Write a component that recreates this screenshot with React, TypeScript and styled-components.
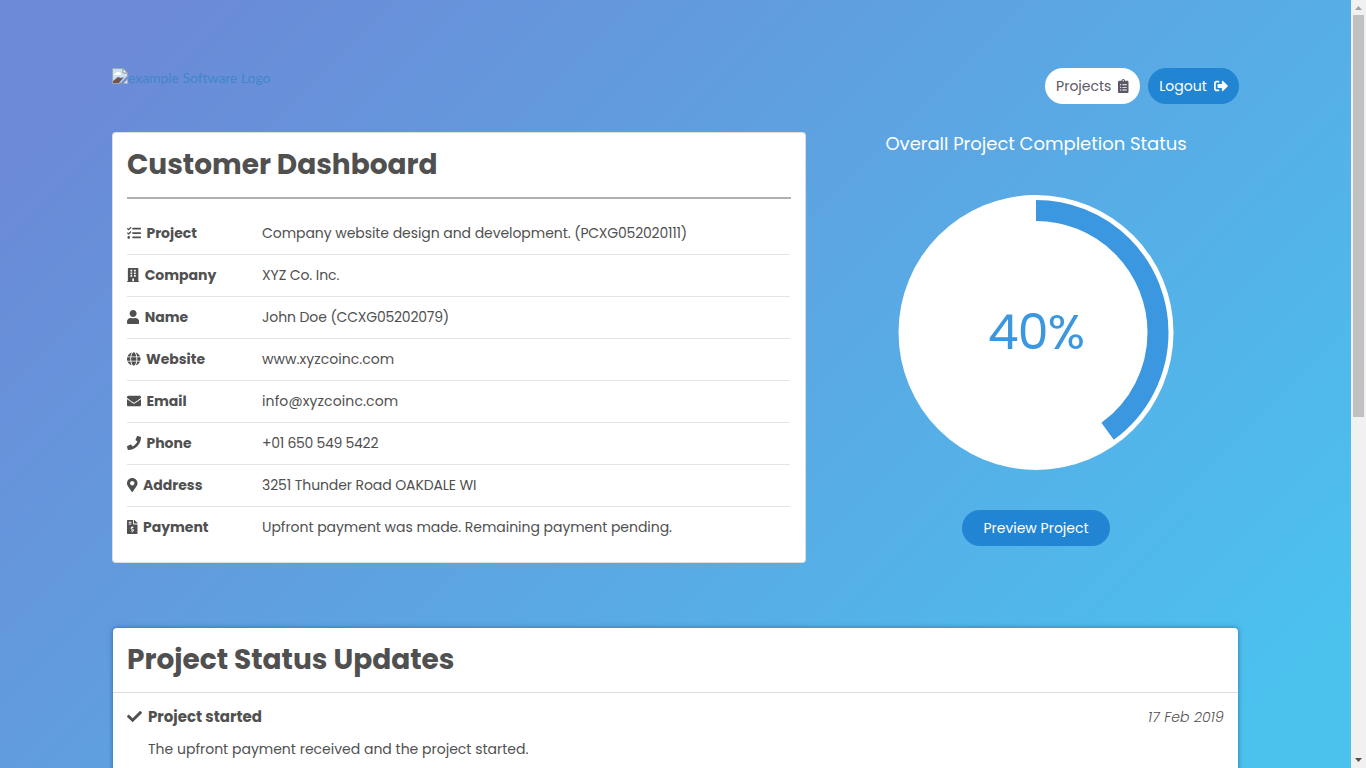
import React from 'react';
import styled, { createGlobalStyle } from 'styled-components';
import type { IconType } from 'react-icons';
import {
  FaBuilding, FaCheck, FaClipboardList, FaEnvelope, FaFileInvoiceDollar, FaGlobe,
  FaMapMarkerAlt, FaPhone, FaSignOutAlt, FaTasks, FaUser,
} from 'react-icons/fa';

const GlobalStyle = createGlobalStyle`
  *, *::before, *::after { box-sizing: border-box; }
  body {
    margin: 0;
    overflow: hidden;
    font-family: Poppins, Inter, 'Open Sans', sans-serif;
    font-size: 14px;
    line-height: 21px;
    color: #505050;
  }
  h1, h2, h3, p, dl, dt, dd { margin: 0; }
`;

const Window = styled.div`
  display: flex;
  width: 1366px;
  height: 768px;
  overflow: hidden;
`;

const Page = styled.main`
  flex: 1;
  min-width: 0;
  height: 768px;
  overflow: hidden;
  padding: 68px 112px 0;
  background: linear-gradient(135deg, #6c8ad7 8%, #4bc1ee 93%);
`;

const Label = styled.span<{ $track?: number }>`
  letter-spacing: ${p => p.$track ?? 0}px;
  white-space: nowrap;
`;

const Header = styled.header`
  display: flex;
  justify-content: space-between;
  align-items: flex-start;
  height: 64px;
`;

const Logo = styled.a`
  display: flex;
  align-items: flex-start;
  height: 20px;
  color: #4087cc;
  font-family: Lato, sans-serif;
  font-size: 14px;
  line-height: 20px;
`;

const Actions = styled.nav`
  display: flex;
  gap: 8px;
`;

const Pill = styled.button<{ $width: number; $light?: boolean; $iconWidth?: number }>`
  display: flex;
  align-items: center;
  justify-content: center;
  gap: 7px;
  width: ${p => p.$width}px;
  height: 36px;
  padding: 0;
  border: 0;
  border-radius: 18px;
  background: ${p => (p.$light ? '#fff' : '#2185d3')};
  color: ${p => (p.$light ? '#5c5866' : '#fff')};
  font: inherit;
  & > svg { width: ${p => p.$iconWidth ?? 14}px; height: 14px; }
`;

const Overview = styled.section`
  display: flex;
  justify-content: space-between;
  height: 496px;
`;

const DetailsCard = styled.article`
  width: 694px;
  height: 431px;
  padding: 14px;
  border: 1px solid rgba(0, 0, 0, 0.13);
  border-radius: 4px;
  background: #fff;
`;

const CardTitle = styled.h1`
  font-size: 28px;
  line-height: 36px;
  font-weight: 700;
`;

const DetailsHead = styled.div`
  height: 52px;
  border-bottom: 2px solid #b0b0b0;
  margin-bottom: 14px;
`;

const DetailRow = styled.div`
  display: flex;
  align-items: center;
  width: 663px;
  height: 42px;
  border-bottom: 1px solid #e3e4e5;
  &:last-child { border-bottom-color: transparent; }
`;

const DetailTerm = styled.dt<{ $iconWidth: number }>`
  display: flex;
  align-items: center;
  gap: 5.4px;
  width: 135px;
  font-weight: 700;
  & > svg { width: ${p => p.$iconWidth}px; height: 14px; margin-bottom: 2px; }
`;

const Completion = styled.aside`
  display: flex;
  flex-direction: column;
  align-items: center;
  width: 406px;
`;

const CompletionTitle = styled.h2`
  margin-bottom: 39px;
  color: #fff;
  font-size: 18px;
  font-weight: 400;
  line-height: 24px;
`;

const Dial = styled.div`
  display: grid;
  width: 276px;
  height: 275px;
  margin-bottom: 40px;
  place-items: center;
  & > * { grid-area: 1 / 1; }
`;

const Percent = styled.span`
  padding-bottom: 1px;
  color: #3b97df;
  font-size: 49px;
  line-height: 60px;
  font-weight: 400;
`;

const UpdatesCard = styled.article`
  height: 400px;
  margin: 0 1px;
  border-radius: 4px;
  background: #fff;
  box-shadow: 0 0 5px rgba(0, 50, 110, 0.5);
`;

const UpdatesHead = styled.div`
  height: 65px;
  padding: 14px;
  border-bottom: 1px solid #dcddde;
`;

const Update = styled.div`
  padding: 14px 14px 0;
`;

const UpdateTop = styled.div`
  display: flex;
  align-items: center;
  justify-content: space-between;
  height: 21px;
`;

const UpdateTitle = styled.h3`
  display: flex;
  align-items: center;
  gap: 6px;
  padding-bottom: 2px;
  font-size: 15px;
  font-weight: 700;
`;

const UpdateDate = styled.time`
  font-style: italic;
  font-weight: 300;
`;

const UpdateText = styled.p`
  margin-top: 11px;
  padding-left: 21px;
`;

const Scrollbar = styled.div`
  display: flex;
  flex-direction: column;
  align-items: center;
  width: 15px;
  height: 768px;
  background: #f1f1f1;
`;

const Thumb = styled.div`
  width: 11px;
  height: 402px;
  margin-bottom: auto;
  background: #c1c1c1;
`;

const details: { icon: IconType; iconWidth: number; term: string; value: string; track: number; code?: string }[] = [
  { icon: FaTasks, iconWidth: 14, term: 'Project', value: 'Company website design and development. ', track: -0.06, code: '(PCXG052020111)' },
  { icon: FaBuilding, iconWidth: 12.25, term: 'Company', value: 'XYZ Co. Inc.', track: -0.1 },
  { icon: FaUser, iconWidth: 12.25, term: 'Name', value: 'John Doe ', track: -0.1, code: '(CCXG05202079)' },
  { icon: FaGlobe, iconWidth: 13.56, term: 'Website', value: 'www.xyzcoinc.com', track: 0.05 },
  { icon: FaEnvelope, iconWidth: 14, term: 'Email', value: 'info@xyzcoinc.com', track: 0.12 },
  { icon: FaPhone, iconWidth: 14, term: 'Phone', value: '+01 650 549 5422', track: -0.28 },
  { icon: FaMapMarkerAlt, iconWidth: 10.5, term: 'Address', value: '3251 Thunder Road OAKDALE WI', track: -0.1 },
  { icon: FaFileInvoiceDollar, iconWidth: 10.5, term: 'Payment', value: 'Upfront payment was made. Remaining payment pending.', track: -0.04 },
];

const BrokenImage = () => (
  <svg width="16" height="16" viewBox="0 0 16 16">
    <path d="M0.5 0.5H11L15.5 5V8L8 15.5H0.5Z" fill="#c9e1f7" stroke="#a0a5ad" />
    <path d="M11 0.5V5H15.5Z" fill="#fff" stroke="#8c9098" />
    <path d="M2 7q0-2 2-2 1-2 3-1 2 0 2 3Z" fill="#fff" />
    <path d="M1 15V13l5-4 3 1 3-1-5 6Z" fill="#70554f" />
    <path d="M11.5 15.5 15.5 11V15.5Z" fill="#e5eaf2" stroke="#a0a5ad" strokeWidth="0.6" />
  </svg>
);

const ProgressRing = ({ value }: { value: number }) => {
  const r = 122;
  const length = 2 * Math.PI * r;
  return (
    <svg width="276" height="275" viewBox="0 0 276 275">
      <circle cx="138" cy="137.5" r="137.5" fill="#fff" />
      <circle
        cx="138" cy="137.5" r={r} fill="none" stroke="#3b97df" strokeWidth="21"
        strokeDasharray={`${(length * value) / 100} ${length}`}
        transform="rotate(-90 138 137.5)"
      />
    </svg>
  );
};

export default function App() {
  return (
    <Window>
      <GlobalStyle />
      <Page>
        <Header>
          <Logo><BrokenImage /><Label $track={-0.05}>example Software Logo</Label></Logo>
          <Actions>
            <Pill $width={95} $light $iconWidth={10.5}><Label>Projects</Label><FaClipboardList /></Pill>
            <Pill $width={91}><Label>Logout</Label><FaSignOutAlt /></Pill>
          </Actions>
        </Header>
        <Overview>
          <DetailsCard>
            <DetailsHead><CardTitle><Label>Customer Dashboard</Label></CardTitle></DetailsHead>
            <dl>
              {details.map(({ icon: Icon, iconWidth, term, value, track, code }) => (
                <DetailRow key={term}>
                  <DetailTerm $iconWidth={iconWidth}><Icon /><Label>{term}</Label></DetailTerm>
                  <dd>
                    <Label $track={track}>{value}</Label>
                    {code && <Label $track={-0.22}>{code}</Label>}
                  </dd>
                </DetailRow>
              ))}
            </dl>
          </DetailsCard>
          <Completion>
            <CompletionTitle><Label $track={-0.02}>Overall Project Completion Status</Label></CompletionTitle>
            <Dial><ProgressRing value={40} /><Percent><Label $track={-0.8}>40%</Label></Percent></Dial>
            <Pill $width={148}><Label>Preview Project</Label></Pill>
          </Completion>
        </Overview>
        <UpdatesCard>
          <UpdatesHead><CardTitle as="h2"><Label>Project Status Updates</Label></CardTitle></UpdatesHead>
          <Update>
            <UpdateTop>
              <UpdateTitle><FaCheck /><Label>Project started</Label></UpdateTitle>
              <UpdateDate><Label $track={0.15}>17 Feb 2019</Label></UpdateDate>
            </UpdateTop>
            <UpdateText><Label>The upfront payment received and the project started.</Label></UpdateText>
          </Update>
        </UpdatesCard>
      </Page>
      <Scrollbar>
        <svg width="15" height="15" viewBox="0 0 15 15"><path d="M4 10 7.5 6 11 10Z" fill="#a3a3a3" /></svg>
        <Thumb />
        <svg width="15" height="15" viewBox="0 0 15 15"><path d="M4 5 7.5 9 11 5Z" fill="#505050" /></svg>
      </Scrollbar>
    </Window>
  );
}
